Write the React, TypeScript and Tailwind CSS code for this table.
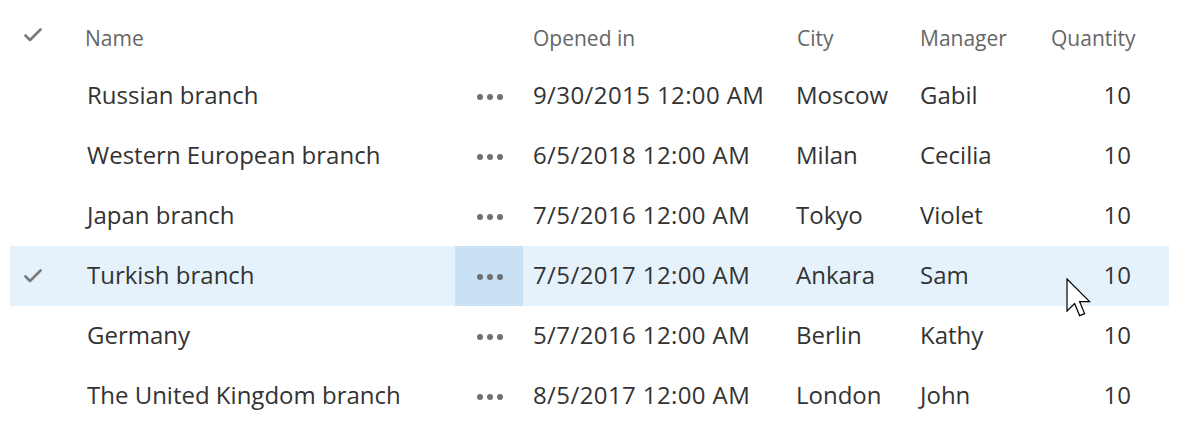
const rows = [
  { name: "Russian branch", opened: "9/30/2015 12:00 AM", city: "Moscow", manager: "Gabil", qty: 10 },
  { name: "Western European branch", opened: "6/5/2018 12:00 AM", city: "Milan", manager: "Cecilia", qty: 10 },
  { name: "Japan branch", opened: "7/5/2016 12:00 AM", city: "Tokyo", manager: "Violet", qty: 10 },
  { name: "Turkish branch", opened: "7/5/2017 12:00 AM", city: "Ankara", manager: "Sam", qty: 10, selected: true },
  { name: "Germany", opened: "5/7/2016 12:00 AM", city: "Berlin", manager: "Kathy", qty: 10 },
  { name: "The United Kingdom branch", opened: "8/5/2017 12:00 AM", city: "London", manager: "John", qty: 10 },
];

const cols = "grid w-[1159px] grid-cols-[65px_380px_68px_261px_124px_132px_129px]";

function Check({ className }: { className?: string }) {
  return (
    <svg width="18" height="14" viewBox="0 0 18 14" className={className}>
      <path d="M1.5 7.5 L6 12 L16.5 1.5" fill="none" stroke="currentColor" strokeWidth="2.6" strokeLinecap="round" strokeLinejoin="round" />
    </svg>
  );
}

function Dots() {
  return (
    <div className="flex items-center gap-[4px]">
      <span className="w-[6px] h-[6px] rounded-full bg-[#707070]" />
      <span className="w-[6px] h-[6px] rounded-full bg-[#707070]" />
      <span className="w-[6px] h-[6px] rounded-full bg-[#707070]" />
    </div>
  );
}

export default function App() {
  return (
    <div
      className="relative w-[1193px] h-[428px] bg-white pt-[10px] pl-[10px] overflow-hidden"
      style={{ fontFamily: '"Open Sans", "Noto Sans", sans-serif' }}
    >
      {/* Header */}
      <div className={`${cols} h-[56px] items-center text-[21px] text-[#666666]`}>
        <div className="flex justify-center pb-[6px] text-[#7a7a7a]">
          <Check className="-ml-[20px]" />
        </div>
        <div className="pl-[10px] pt-[2px]">Name</div>
        <div />
        <div className="pl-[10px] pt-[2px]">Opened in</div>
        <div className="pl-[13px] pt-[2px]">City</div>
        <div className="pl-[12px] pt-[2px]">Manager</div>
        <div className="pl-[11px] pt-[2px]">Quantity</div>
      </div>

      {/* Rows */}
      {rows.map((r) => (
        <div
          key={r.name}
          className={`${cols} h-[60px] items-center text-[24px] text-[#333333] ${r.selected ? "bg-[#e6f2fb]" : ""}`}
        >
          <div className="flex justify-center text-[#7a7a7a]">
            {r.selected && <Check className="-ml-[20px]" />}
          </div>
          <div className="pl-[12px] pb-[2px] whitespace-nowrap">{r.name}</div>
          <div className={`h-full flex items-center justify-center pl-[2px] pt-[2px] ${r.selected ? "bg-[#c9e1f5]" : ""}`}>
            <Dots />
          </div>
          <div className="pl-[10px] pb-[2px] whitespace-nowrap tracking-[0.4px]">{r.opened}</div>
          <div className="pl-[12px] pb-[2px]">{r.city}</div>
          <div className="pl-[12px] pb-[2px]">{r.manager}</div>
          <div className="text-right pr-[38px] pb-[2px]">{r.qty}</div>
        </div>
      ))}

      {/* Mouse cursor */}
      <svg className="absolute left-[1066px] top-[278px]" width="26" height="40" viewBox="0 0 13 20">
        <path
          d="M0.5 0.5 L0.5 16.5 L4.3 12.8 L6.8 18.8 L9.3 17.8 L6.8 11.8 L11.8 11.8 Z"
          fill="white"
          stroke="black"
          strokeWidth="0.6"
          strokeLinejoin="miter"
        />
      </svg>
    </div>
  );
}
